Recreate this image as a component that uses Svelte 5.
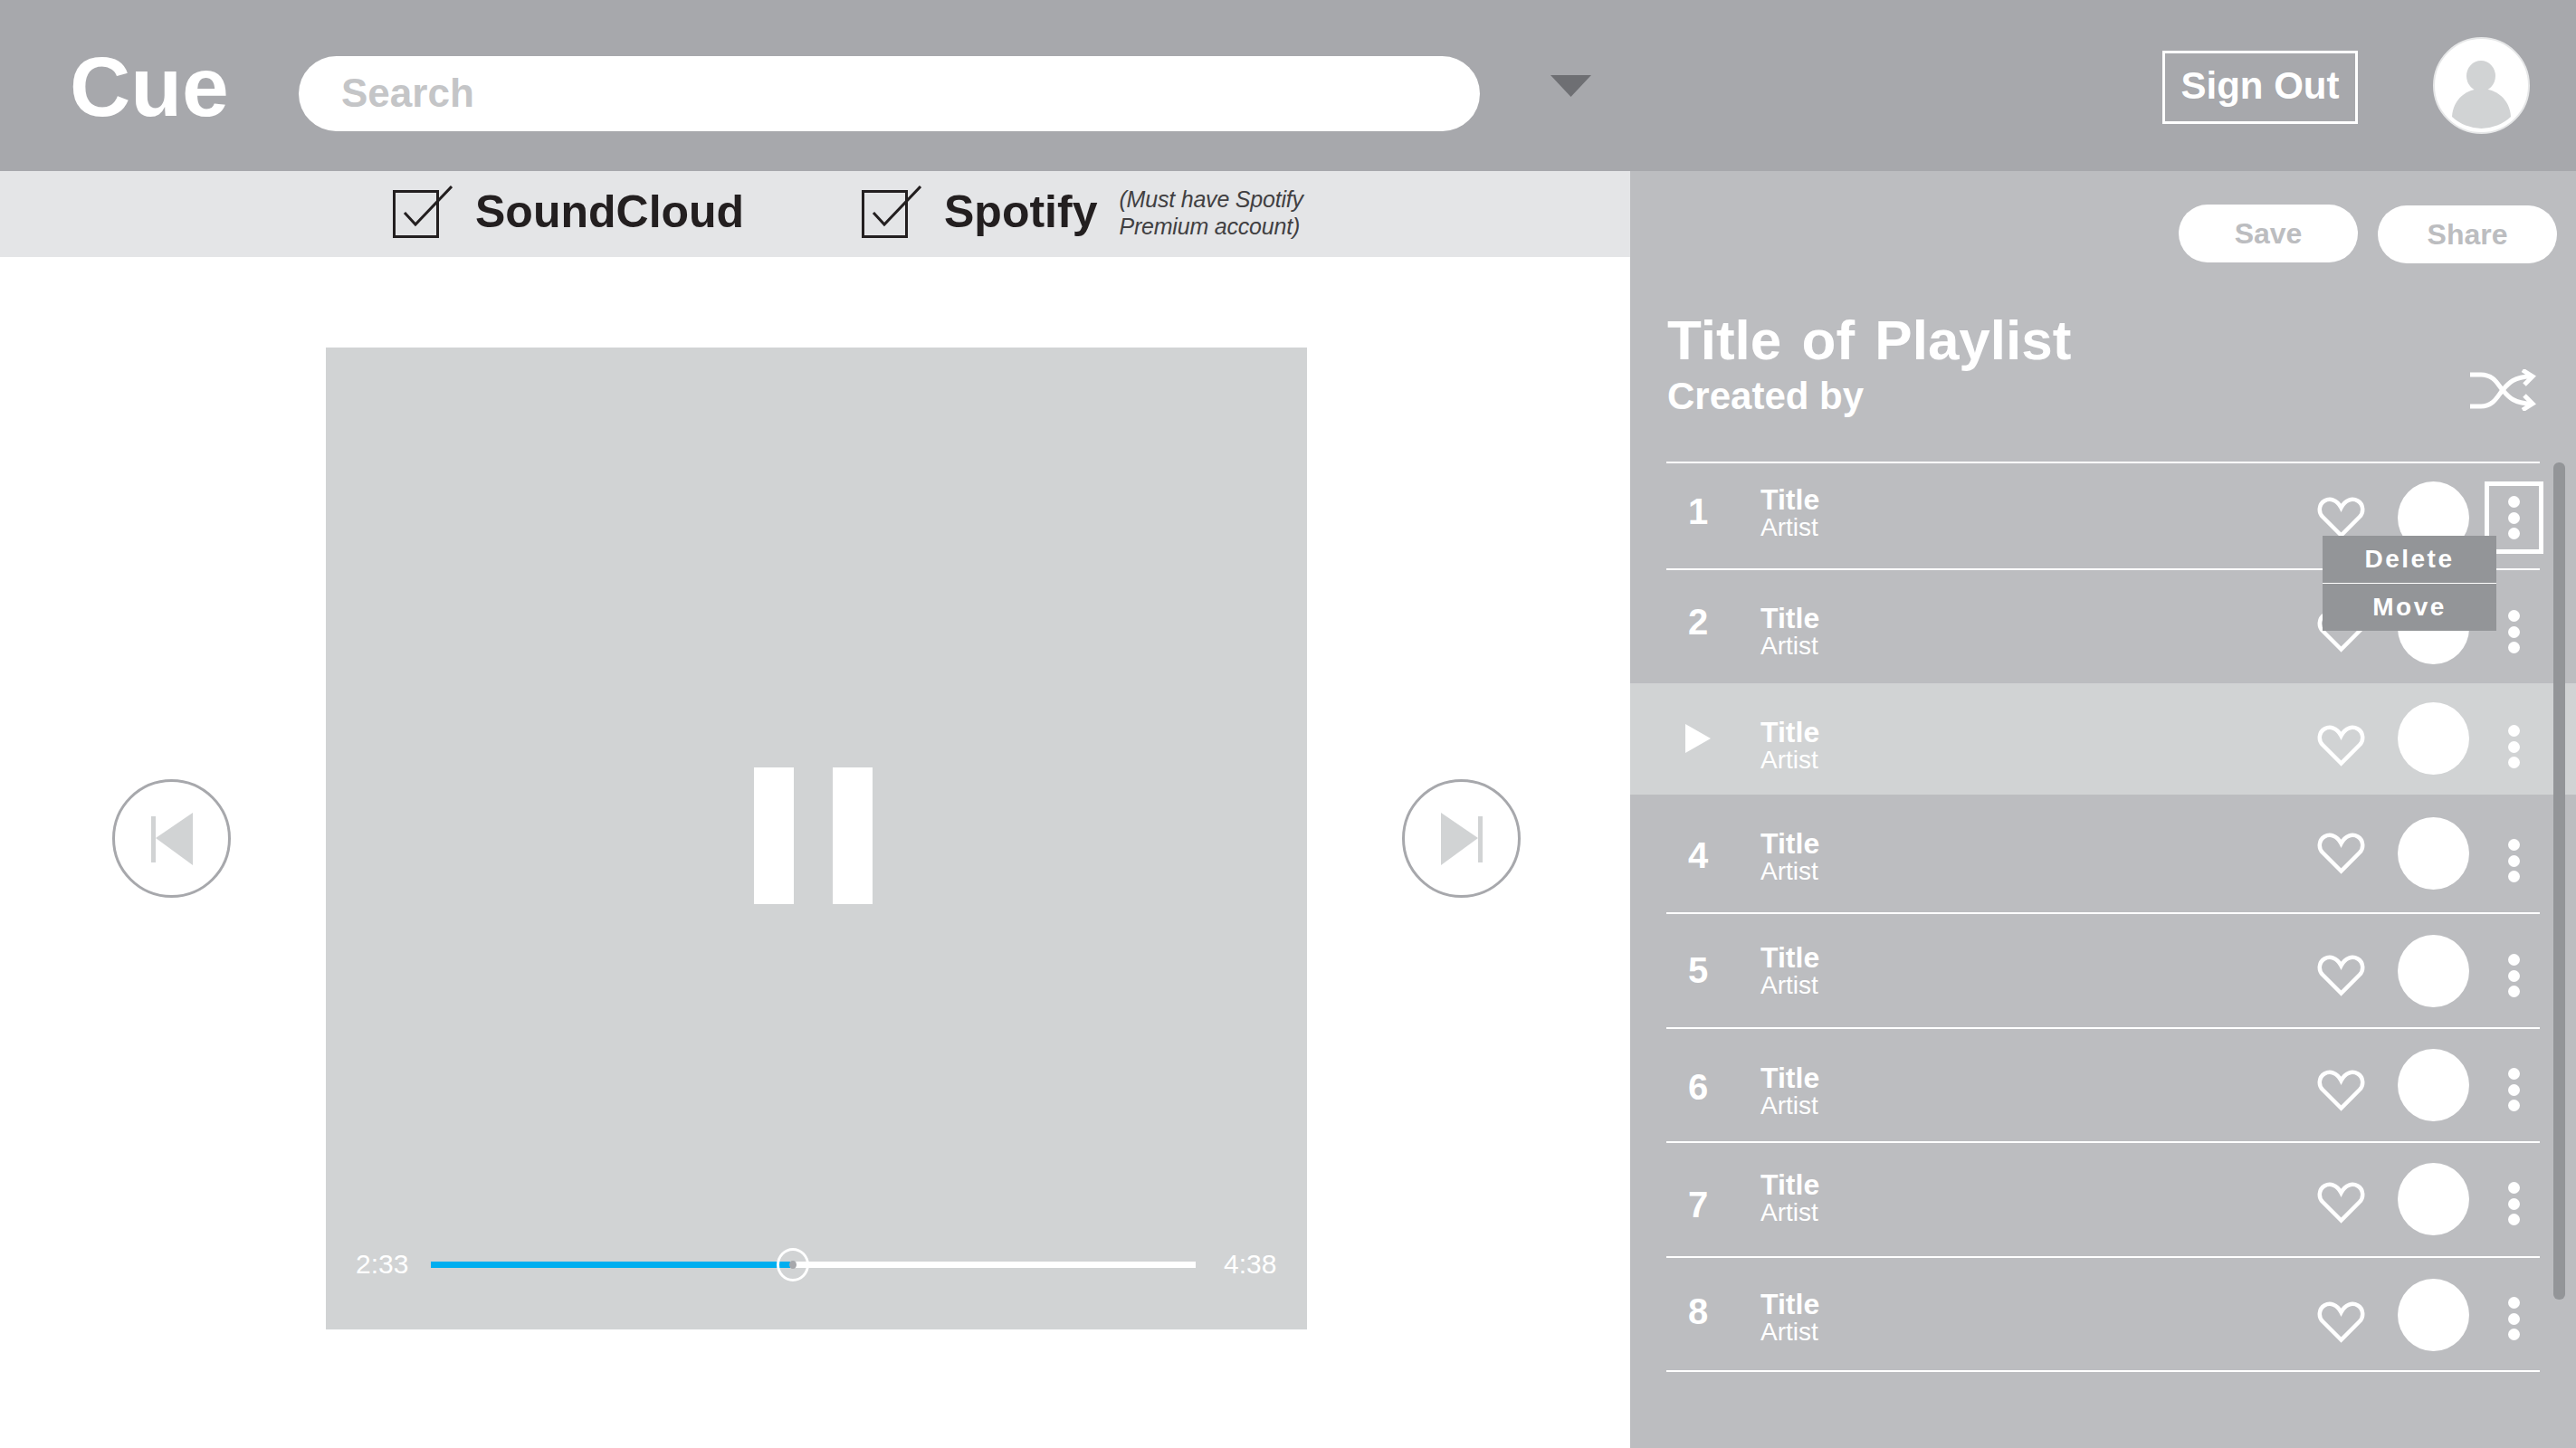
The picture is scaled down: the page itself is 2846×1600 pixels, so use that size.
<script>
	// y positions taken per row, the rows of this wireframe are not evenly spaced
	const rows = [
		{ n: 1, top: 510, num: 565, title: 563, heart: 549, circle: 532, dots: 548, line: true },
		{ n: 2, top: 628, num: 687, title: 694, heart: 675, circle: 654, dots: 674, line: true },
		{ n: 3, top: 755, num: 816, title: 820, heart: 801, circle: 776, dots: 801, playing: true },
		{ n: 4, top: 878, num: 945, title: 943, heart: 920, circle: 903, dots: 927 },
		{ n: 5, top: 1008, num: 1072, title: 1069, heart: 1055, circle: 1033, dots: 1054, line: true },
		{ n: 6, top: 1135, num: 1201, title: 1202, heart: 1182, circle: 1159, dots: 1180, line: true },
		{ n: 7, top: 1261, num: 1331, title: 1320, heart: 1306, circle: 1285, dots: 1306, line: true },
		{ n: 8, top: 1388, num: 1449, title: 1452, heart: 1438, circle: 1413, dots: 1433, line: true }
	];
	const listEnd = 1514;

	const height = (i) => (i + 1 < rows.length ? rows[i + 1].top : listEnd) - rows[i].top;
	const offset = (y, r) => y - r.top - 2;
</script>

<div class="page">
	<header class="topbar">
		<div class="logo">Cue</div>
		<div class="search">Search</div>
		<svg class="caret" width="45" height="24" viewBox="0 0 45 24"><polygon points="0,0 45,0 22.5,24" fill="#6e6f73" /></svg>
		<button class="signout">Sign Out</button>
		<svg class="avatar" width="107" height="107" viewBox="0 0 107 107">
			<circle cx="53.5" cy="53.5" r="52.5" fill="#fff" stroke="#e6e7e8" stroke-width="2" />
			<ellipse cx="53" cy="43" rx="16" ry="17" fill="#d1d3d4" />
			<path d="M21 88 C22 68 38 57 53.5 57 C69 57 85 68 86 88 A47.4 47.4 0 0 1 21 88 Z" fill="#d1d3d4" />
		</svg>
	</header>

	<div class="content">
		<main class="left">
			<div class="filters">
				<div class="filter first">
					<svg width="66" height="58" viewBox="0 0 66 58">
						<rect x="1.5" y="6.5" width="48" height="50" fill="none" stroke="#231f20" stroke-width="3" />
						<polyline points="13,30 25,43 65,1" fill="none" stroke="#231f20" stroke-width="3" />
					</svg>
					<span class="source">SoundCloud</span>
				</div>
				<div class="filter">
					<svg width="66" height="58" viewBox="0 0 66 58">
						<rect x="1.5" y="6.5" width="48" height="50" fill="none" stroke="#231f20" stroke-width="3" />
						<polyline points="13,30 25,43 65,1" fill="none" stroke="#231f20" stroke-width="3" />
					</svg>
					<span class="source">Spotify</span>
					<span class="note">(Must have Spotify<br />Premium account)</span>
				</div>
			</div>

			<div class="player">
				<button class="skip" aria-label="Previous">
					<svg width="46" height="58" viewBox="0 0 46 58">
						<rect x="0" y="4" width="5" height="51" fill="#d1d3d4" />
						<polygon points="5,28 46,0 46,58" fill="#d1d3d4" />
					</svg>
				</button>

				<div class="art">
					<div class="pause">
						<span></span>
						<span></span>
					</div>
					<div class="seek">
						<span class="time">2:33</span>
						<div class="track">
							<div class="fill"></div>
							<div class="handle"><i></i></div>
						</div>
						<span class="time">4:38</span>
					</div>
				</div>

				<button class="skip next" aria-label="Next">
					<svg width="46" height="58" viewBox="0 0 46 58">
						<polygon points="0,0 41,28 0,58" fill="#d1d3d4" />
						<rect x="41" y="4" width="5" height="51" fill="#d1d3d4" />
					</svg>
				</button>
			</div>
		</main>

		<aside class="panel">
			<div class="actions">
				<button class="pill">Save</button>
				<button class="pill share">Share</button>
			</div>

			<div class="playlist-head">
				<div>
					<h1>Title of Playlist</h1>
					<h2>Created by</h2>
				</div>
				<svg class="shuffle" width="73" height="46" viewBox="0 0 73 46" fill="none" stroke="#fff" stroke-width="5">
					<path d="M0 6 H12 C26 6 30 16 36 23 C42 30 48 38 68 38" />
					<path d="M0 41 H12 C26 41 30 30 36 23 C42 16 48 8 68 8" />
					<polyline points="58,1 69,8 60,17" />
					<polyline points="60,29 69,38 58,45" />
				</svg>
			</div>

			<div class="list">
				{#each rows as r, i}
					<div class="row" class:playing={r.playing}>
						<div class="row-in" class:line={r.line} style="height:{height(i)}px">
							<div class="num" style="margin-top:{offset(r.num, r) - 20}px">
								{#if r.playing}
									<svg width="28" height="32" viewBox="0 0 28 32"><polygon points="0,0 28,16 0,32" fill="#fff" /></svg>
								{:else}
									{r.n}
								{/if}
							</div>
							<div class="info" style="margin-top:{offset(r.title, r) - 27}px">
								<div class="title">Title</div>
								<div class="artist">Artist</div>
							</div>
							<svg class="heart" style="margin-top:{offset(r.heart, r)}px" width="53" height="47" viewBox="0 0 53 47">
								<path d="M26.5 42.5 L6 22 C1 17 2 8 8 4.5 C14 1 22 3 26.5 12 C31 3 39 1 45 4.5 C51 8 52 17 47 22 Z" fill="none" stroke="#fff" stroke-width="4.5" />
							</svg>
							<div class="circle" style="margin-top:{offset(r.circle, r)}px"></div>
							<div class="dots" style="margin-top:{offset(r.dots, r)}px">
								<span></span>
								<span></span>
								<span></span>
							</div>

							{#if r.n === 1}
								<div class="dots-box"></div>
								<div class="menu">
									<div>Delete</div>
									<div>Move</div>
								</div>
							{/if}
						</div>
					</div>
				{/each}
				<div class="list-end"></div>
			</div>

			<div class="scrollbar"></div>
		</aside>
	</div>
</div>

<style>
:global(body) {
	margin: 0;
	background: #fff;
}

.page {
	width: 2846px;
	height: 1600px;
	overflow: hidden;
	font-family: "Liberation Sans", Arial, sans-serif;
}

button {
	font-family: inherit;
	padding: 0;
	cursor: pointer;
}

/* top bar */
.topbar {
	display: flex;
	align-items: flex-start;
	height: 189px;
	padding-left: 77px;
	background: #a7a8ac;
}

.logo {
	width: 253px;
	margin-top: 50px;
	font-size: 93px;
	line-height: 93px;
	font-weight: bold;
	color: #fff;
}

.search {
	width: 1305px;
	height: 83px;
	margin-top: 62px;
	padding-left: 47px;
	box-sizing: border-box;
	border-radius: 42px;
	background: #fff;
	color: #c4c5c7;
	font-size: 44px;
	font-weight: bold;
	line-height: 81px;
}

.caret {
	margin: 83px 0 0 78px;
}

.signout {
	width: 216px;
	height: 81px;
	margin: 56px 0 0 631px;
	padding-bottom: 3px;
	border: 3px solid #fff;
	background: none;
	color: #fff;
	font-size: 42px;
	font-weight: bold;
}

.avatar {
	margin: 41px 0 0 83px;
}

.content {
	display: flex;
	height: 1411px;
}

/* left side */
.left {
	width: 1801px;
}

.filters {
	display: flex;
	align-items: flex-start;
	height: 95px;
	padding-left: 434px;
	box-sizing: border-box;
	background: #e4e5e7;
	color: #231f20;
}

.filter {
	display: flex;
	align-items: flex-start;
}

.filter.first {
	width: 518px;
}

.filter svg {
	margin-top: 16px;
}

.source {
	margin: 20px 0 0 25px;
	font-size: 50px;
	line-height: 50px;
	font-weight: bold;
}

.note {
	margin: 17px 0 0 24px;
	font-size: 25px;
	line-height: 29.5px;
	font-style: italic;
	color: #414042;
	letter-spacing: -0.2px;
}

.player {
	display: flex;
	align-items: center;
	padding: 100px 0 0 124px;
}

.skip {
	display: flex;
	align-items: center;
	justify-content: center;
	width: 131px;
	height: 131px;
	border: 3px solid #a7a8ac;
	border-radius: 50%;
	background: #fff;
}

.art {
	width: 1084px;
	height: 1085px;
	margin: 0 105px;
	background: #d1d3d4;
}

.skip.next {
	margin-left: 0;
}

.pause {
	display: flex;
	gap: 43px;
	padding: 464px 0 0 473px;
}

.pause span {
	width: 44px;
	height: 151px;
	background: #fff;
}

.seek {
	display: flex;
	align-items: center;
	height: 40px;
	margin-top: 378px;
	padding-left: 33px;
	color: #fff;
}

.time {
	width: 58px;
	font-size: 30px;
	white-space: nowrap;
}

.track {
	position: relative;
	width: 845px;
	height: 7px;
	margin: 0 31px 0 25px;
	background: #fff;
}

.fill {
	width: 397px;
	height: 7px;
	background: #00aeef;
}

.handle {
	position: absolute;
	left: 382px;
	top: -15px;
	display: flex;
	align-items: center;
	justify-content: center;
	width: 36px;
	height: 37px;
	box-sizing: border-box;
	border: 3px solid #fff;
	border-radius: 50%;
}

.handle i {
	width: 8px;
	height: 9px;
	border-radius: 50%;
	background: #a7a8ac;
}

/* playlist */
.panel {
	position: relative;
	flex: 1;
	background: #bcbdc0;
	color: #fff;
}

.actions {
	display: flex;
	justify-content: flex-end;
	gap: 22px;
	padding: 37px 21px 0 0;
}

.pill {
	width: 198px;
	height: 64px;
	border: none;
	border-radius: 32px;
	background: #fff;
	color: #bcbdc0;
	font-size: 32px;
	font-weight: bold;
}

.pill.share {
	margin-top: 1px;
}

.playlist-head {
	display: flex;
	justify-content: space-between;
	align-items: flex-start;
	height: 165px;
	margin-top: 54px;
	padding: 0 44px 0 41px;
}

h1 {
	margin: 0;
	font-size: 62px;
	line-height: 62px;
	word-spacing: 5px;
}

h2 {
	margin: 8px 0 0;
	font-size: 42px;
	line-height: 46px;
}

.shuffle {
	margin-top: 63px;
}

.row {
	padding: 0 40px;
}

.row.playing {
	background: #d1d3d4;
}

.row-in {
	position: relative;
	display: flex;
	align-items: flex-start;
	box-sizing: border-box;
	padding-right: 22px;
	border-top: 2px solid transparent;
}

.row-in.line {
	border-top-color: #fff;
}

.num {
	display: flex;
	align-items: center;
	justify-content: center;
	width: 70px;
	height: 40px;
	font-size: 40px;
	font-weight: bold;
	line-height: 40px;
}

.info {
	flex: 1;
	margin-left: 34px;
}

.title {
	font-size: 32px;
	font-weight: bold;
	line-height: 32px;
}

.artist {
	font-size: 28px;
	line-height: 30px;
}

.circle {
	width: 79px;
	height: 80px;
	margin-left: 36px;
	border-radius: 50%;
	background: #fff;
}

.dots {
	display: flex;
	flex-direction: column;
	gap: 4.5px;
	margin-left: 43px;
}

.dots span {
	width: 13px;
	height: 13px;
	border-radius: 50%;
	background: #fff;
}

.dots-box {
	position: absolute;
	left: 904px;
	top: 20px;
	width: 65px;
	height: 80px;
	box-sizing: border-box;
	border: 5px solid #fff;
}

.menu {
	position: absolute;
	left: 725px;
	top: 80px;
	z-index: 2;
	display: flex;
	flex-direction: column;
	gap: 1px;
	width: 192px;
	background: #fff;
}

.menu div {
	height: 52px;
	background: #939598;
	font-size: 28px;
	font-weight: bold;
	line-height: 52px;
	letter-spacing: 2.5px;
	text-align: center;
}

.list-end {
	height: 2px;
	margin: 0 40px;
	background: #fff;
}

.scrollbar {
	position: absolute;
	left: 1020px;
	top: 322px;
	width: 13px;
	height: 925px;
	border-radius: 6px;
	background: #939598;
}
</style>
